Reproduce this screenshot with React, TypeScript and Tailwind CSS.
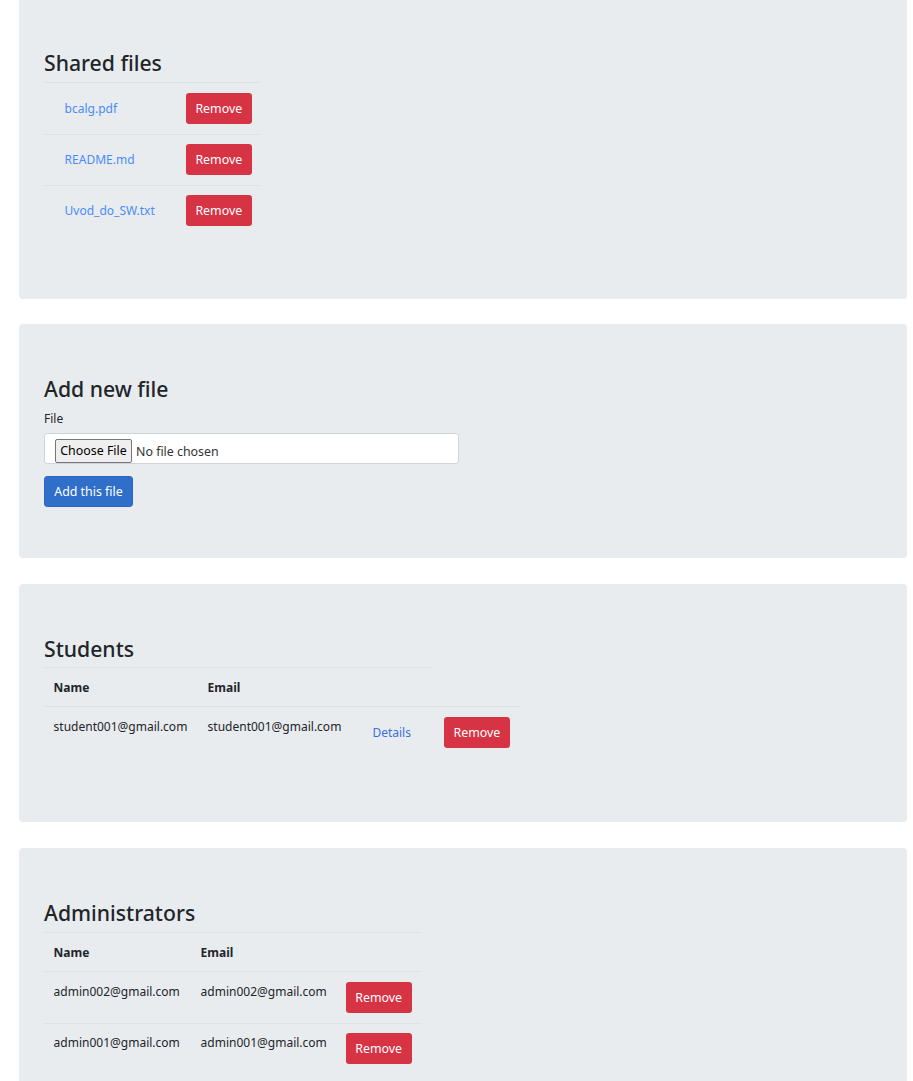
import React from "react";

const RemoveBtn = () => (
  <button className="block w-[66px] h-[31px] text-center rounded-[3.2px] bg-[#d63344] text-white text-[12.4px] leading-[19.2px] border border-transparent">
    Remove
  </button>
);

const Card = ({ children, className = "" }: { children: React.ReactNode; className?: string }) => (
  <div className={"rounded-[4px] bg-[#e9ecef] px-[25px] pt-[51px] " + className}>{children}</div>
);

const H3 = ({ children, mb = "mb-[6.4px]" }: { children: React.ReactNode; mb?: string }) => (
  <h3 className={"text-[21.2px] font-medium leading-[27px] text-[#212529] " + mb}>{children}</h3>
);

const td = "border-t border-[#dee2e6] p-[9.6px] align-top text-left";

export default function App() {
  const files = ["bcalg.pdf", "README.md", "Uvod_do_SW.txt"];
  const admins = ["admin002@gmail.com", "admin001@gmail.com"];
  return (
    <div className="h-[1081px] overflow-hidden bg-white font-['Noto_Sans',sans-serif] text-[#212529] text-[12px] leading-[19.2px]">
      <div className="ml-[19px] w-[888px] -mt-[2px] flex flex-col">
        {/* Shared files */}
        <Card className="pb-[50px] mb-[25.6px]">
          <H3>Shared files</H3>
          <table className="border-separate border-spacing-0 mb-[12.8px]">
            <tbody>
              {files.map((f) => (
                <tr key={f}>
                  <td className={td + " w-[133px] pr-[4px]"}>
                    <a className="block w-fit pl-[11px] pr-[12px] pt-[6px] pb-[5.4px] text-[#4a8bfa] whitespace-nowrap">{f}</a>
                  </td>
                  <td className={td + " pl-[8.8px]"}>
                    <RemoveBtn />
                  </td>
                </tr>
              ))}
            </tbody>
          </table>
        </Card>

        {/* Add new file */}
        <Card className="pb-[51px] mb-[25.6px]">
          <H3>Add new file</H3>
          <label className="block mb-[5.4px]">File</label>
          <div className="w-[415px] h-[31px] bg-white border border-[#ced4da] rounded-[3.2px] pl-[10px] pt-[5px] flex items-start">
            <span className="inline-flex items-center justify-center w-[77px] h-[24px] bg-[#efefef] border border-[#767676] rounded-[2px] text-[12.4px] text-black leading-none">
              Choose File
            </span>
            <span className="ml-[4px] h-[24px] flex items-center text-[12.4px] text-[#333]">No file chosen</span>
          </div>
          <button className="block mt-[12px] h-[31px] w-[89px] text-center rounded-[3.2px] bg-[#2f6fca] text-white text-[12.4px] leading-[19.2px] border border-[#2a66bd]">
            Add this file
          </button>
        </Card>

        {/* Students */}
        <Card className="pb-[51px] mb-[25.8px]">
          <H3 mb="mb-[5px]">Students</H3>
          <table className="border-separate border-spacing-0 mb-[12.8px]">
            <thead>
              <tr>
                <th className={td + " w-[154px] font-bold"}>Name</th>
                <th className={td + " w-[153px] font-bold"}>Email</th>
                <th className={td + " w-[82px]"}></th>
              </tr>
            </thead>
            <tbody>
              <tr>
                <td className={td + " whitespace-nowrap"}>student001@gmail.com</td>
                <td className={td + " whitespace-nowrap"}>student001@gmail.com</td>
                <td className={td + " pl-[8.6px]"}>
                  <a className="block w-fit px-[12.8px] py-[6.4px] text-[#3b6fe0]">Details</a>
                </td>
                <td className={td + " w-[86px] pl-[10.6px]"}>
                  <RemoveBtn />
                </td>
              </tr>
            </tbody>
          </table>
        </Card>

        {/* Administrators */}
        <Card className="pb-[51px]">
          <H3 mb="mb-[6px]">Administrators</H3>
          <table className="border-separate border-spacing-0 mb-[12.8px]">
            <thead>
              <tr>
                <th className={td + " w-[147px] font-bold"}>Name</th>
                <th className={td + " w-[146px] font-bold"}>Email</th>
                <th className={td + " w-[85px]"}></th>
              </tr>
            </thead>
            <tbody>
              {admins.map((a) => (
                <tr key={a}>
                  <td className={td + " whitespace-nowrap"}>{a}</td>
                  <td className={td + " whitespace-nowrap"}>{a}</td>
                  <td className={td + " pl-[8.6px]"}>
                    <RemoveBtn />
                  </td>
                </tr>
              ))}
            </tbody>
          </table>
        </Card>
      </div>
    </div>
  );
}
